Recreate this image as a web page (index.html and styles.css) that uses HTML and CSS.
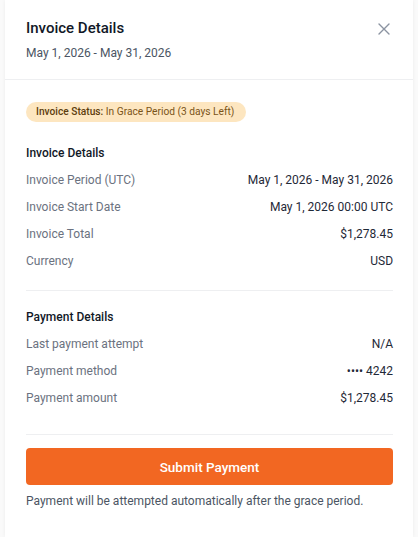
FILE: index.html
```html
<!DOCTYPE html>
<html lang="en">
<head>
    <meta charset="UTF-8">
    <meta name="viewport" content="width=device-width, initial-scale=1.0">
    <title>Invoice Details</title>
    <link rel="stylesheet" href="styles.css">
</head>
<body>
    <div class="panel">
        <header class="panel-header">
            <div>
                <h1>Invoice Details</h1>
                <p class="subtitle">May 1, 2026 - May 31, 2026</p>
            </div>
            <button class="close" aria-label="Close">
                <svg width="14" height="14" viewBox="0 0 14 14">
                    <path d="M2 2L12 12M12 2L2 12" stroke="#8b93a1" stroke-width="1.4" stroke-linecap="round"/>
                </svg>
            </button>
        </header>
        <div class="panel-body">
            <span class="badge"><strong>Invoice Status:</strong> In Grace Period (3 days Left)</span>

            <section class="section first">
                <h2>Invoice Details</h2>
                <div class="row"><span class="label">Invoice Period (UTC)</span><span class="value">May 1, 2026 - May 31, 2026</span></div>
                <div class="row"><span class="label">Invoice Start Date</span><span class="value">May 1, 2026 00:00 UTC</span></div>
                <div class="row"><span class="label">Invoice Total</span><span class="value">$1,278.45</span></div>
                <div class="row"><span class="label">Currency</span><span class="value">USD</span></div>
            </section>

            <section class="section">
                <h2>Payment Details</h2>
                <div class="row"><span class="label">Last payment attempt</span><span class="value">N/A</span></div>
                <div class="row"><span class="label">Payment method</span><span class="value">•••• 4242</span></div>
                <div class="row"><span class="label">Payment amount</span><span class="value">$1,278.45</span></div>
            </section>

            <div class="actions">
                <button class="submit">Submit Payment</button>
                <p class="note">Payment will be attempted automatically after the grace period.</p>
            </div>
        </div>
    </div>
</body>
</html>
```

FILE: styles.css
```css
body {
    margin: 0;
    background: #fafafa;
    font-family: Roboto, "Liberation Sans", Arial, sans-serif;
    color: #1f2937;
}
.panel {
    width: 408px;
    margin: 0 0 0 5px;
    min-height: 537px;
    background: #fff;
    box-shadow: 0 0 4px rgba(0, 0, 0, 0.06);
}
.panel-header {
    display: flex;
    justify-content: space-between;
    align-items: flex-start;
    padding: 17px 20px 16px 21px;
    border-bottom: 1px solid #eeeff1;
}
h1 {
    margin: 0;
    font-size: 15px;
    line-height: 22px;
    font-weight: 500;
    color: #111827;
}
.subtitle {
    margin: 4px 0 0;
    font-size: 12px;
    line-height: 20px;
    color: #4b5563;
}
.close {
    background: none;
    border: none;
    padding: 0;
    margin: 5px 2px 0 0;
    width: 14px;
    height: 14px;
    cursor: pointer;
}
.close svg {
    display: block;
}
.panel-body {
    padding: 20px 20px 0 21px;
}
.badge {
    display: inline-block;
    height: 20px;
    line-height: 20px;
    padding: 0 12px 0 10px;
    border-radius: 10px;
    background: #fde6c0;
    color: #7a5418;
    font-size: 10.2px;
}
.badge strong {
    font-weight: 500;
    color: #5c3d0d;
}
.section {
    padding: 16px 0 19px;
    border-bottom: 1px solid #eeeff1;
}
.section.first {
    padding-top: 21px;
}
.section + .section {
    padding-bottom: 26px;
}
h2 {
    margin: 0 0 7px;
    font-size: 12px;
    line-height: 20px;
    font-weight: 500;
    color: #111827;
}
.row {
    display: flex;
    justify-content: space-between;
    font-size: 12px;
    line-height: 20px;
    margin-top: 7px;
}
h2 + .row {
    margin-top: 0;
}
.label {
    color: #6b7280;
}
.value {
    color: #1f2937;
}
.actions {
    padding-top: 13px;
}
.submit {
    display: block;
    width: 100%;
    height: 37px;
    border: none;
    border-radius: 4px;
    background: #f26722;
    color: #fff;
    font-family: inherit;
    font-size: 13.5px;
    font-weight: 500;
    cursor: pointer;
}
.note {
    margin: 6px 0 0;
    font-size: 12px;
    line-height: 20px;
    color: #4b5563;
}
```
